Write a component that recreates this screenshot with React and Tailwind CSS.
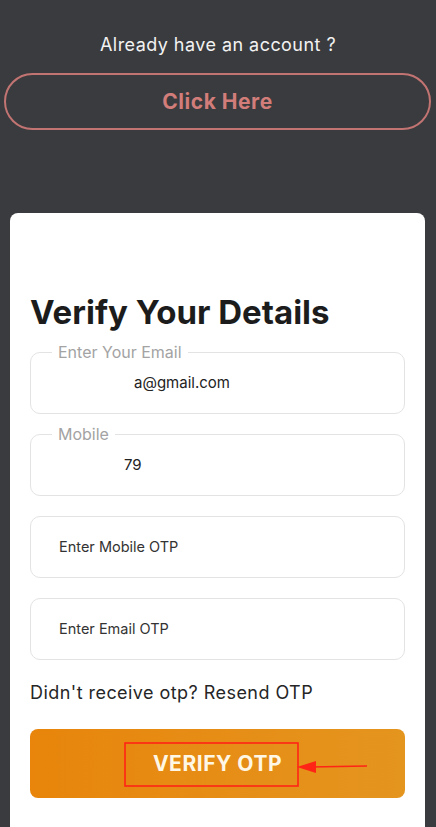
import React from 'react';

function Field({ label, value, placeholder, indent }) {
    return (
        <div className="relative mt-5">
            <div
                className="h-[62px] rounded-[10px] border border-[#e3e3e3] flex items-center"
                style={{ paddingLeft: indent }}
            >
                {value ? (
                    <span className="text-[15px] text-[#222]">{value}</span>
                ) : (
                    <span className="text-[14.5px] text-[#333]">{placeholder}</span>
                )}
            </div>
            {label && (
                <span className="absolute left-[22px] -top-[10px] bg-white px-[6px] text-[16px] leading-5 text-[#a3a3a3]">
                    {label}
                </span>
            )}
        </div>
    );
}

export default function App() {
    return (
        <div
            className="min-h-screen w-[436px] bg-[#3a3b3e] flex flex-col"
            style={{ fontFamily: 'Inter, "Open Sans", sans-serif' }}
        >
            <p className="pt-[33px] text-center text-[18px] leading-6 tracking-wide text-[#f2f2f2]">
                Already have an account ?
            </p>
            <button className="mt-4 ml-[4px] mr-[5px] h-[57px] rounded-full border-2 border-[#c27472] text-[21px] font-bold tracking-wide text-[#d27d7a]">
                Click Here
            </button>

            <div className="mt-[83px] ml-[10px] mr-[11px] flex-1 rounded-t-lg bg-white px-5 pt-[79px] pb-6">
                <h1 className="text-[33px] leading-10 font-bold text-[#1c1c1c]">
                    Verify Your Details
                </h1>

                <Field label="Enter Your Email" value="a@gmail.com" indent={103} />
                <Field label="Mobile" value="79" indent={93} />
                <Field placeholder="Enter Mobile OTP" indent={28} />
                <Field placeholder="Enter Email OTP" indent={28} />

                <p className="mt-[21px] text-[18px] leading-6 tracking-wide text-[#262626]">
                    Didn't receive otp? Resend OTP
                </p>

                <button className="relative mt-6 h-[69px] w-full rounded-lg bg-gradient-to-r from-[#e8850a] to-[#e4951e] text-[21px] font-bold tracking-wide text-[#fff7e6]">
                    VERIFY OTP
                    {/* red annotation box + arrow */}
                    <svg
                        className="absolute left-[94px] top-[13px]"
                        width="246"
                        height="46"
                        viewBox="0 0 246 46"
                    >
                        <rect x="1" y="1" width="173" height="43" fill="none" stroke="#ff2416" strokeWidth="1.6" />
                        <line x1="186" y1="25" x2="243" y2="24" stroke="#ff2416" strokeWidth="1.6" />
                        <polygon points="173,25 192,19 192,31" fill="#ff2416" />
                    </svg>
                </button>
            </div>
        </div>
    );
}
